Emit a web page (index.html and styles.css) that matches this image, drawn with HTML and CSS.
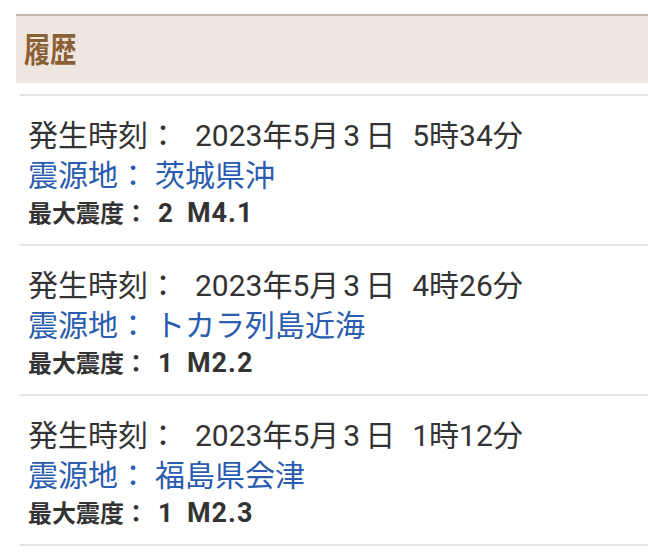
FILE: index.html
```html
<!DOCTYPE html>
<html lang="ja">
<head>
<meta charset="utf-8">
<title>履歴</title>
<link rel="stylesheet" href="styles.css">
</head>
<body>
<div class="page">
  <div class="section-head"><h2 class="section-title">履歴</h2></div>
  <ul class="history">
    <li class="entry">
      <div class="time"><span class="label">発生時刻：</span><span class="date">2023年5月<span class="day">3</span>日</span><span class="clock">5時34分</span></div>
      <div class="place"><span class="label">震源地：</span><span class="val">茨城県沖</span></div>
      <div class="scale"><span class="label">最大震度：</span><span class="num">2</span><span class="mag">M4.1</span></div>
    </li>
    <li class="entry">
      <div class="time"><span class="label">発生時刻：</span><span class="date">2023年5月<span class="day">3</span>日</span><span class="clock">4時26分</span></div>
      <div class="place"><span class="label">震源地：</span><span class="val">トカラ列島近海</span></div>
      <div class="scale"><span class="label">最大震度：</span><span class="num">1</span><span class="mag">M2.2</span></div>
    </li>
    <li class="entry">
      <div class="time"><span class="label">発生時刻：</span><span class="date">2023年5月<span class="day">3</span>日</span><span class="clock">1時12分</span></div>
      <div class="place"><span class="label">震源地：</span><span class="val">福島県会津</span></div>
      <div class="scale"><span class="label">最大震度：</span><span class="num">1</span><span class="mag">M2.3</span></div>
    </li>
  </ul>
</div>
</body>
</html>
```
FILE: styles.css
```css
html, body {
  margin: 0;
  padding: 0;
  background: #ffffff;
}
body {
  font-family: Roboto, "Noto Sans CJK JP", sans-serif;
  color: #333333;
}
.page {
  padding-top: 14px;
}
.section-head {
  margin-left: 16px;
  border-top: 2px solid #c5b6a6;
  background: #efe6e0;
  height: 67px;
  display: flex;
  align-items: center;
  padding-left: 8px;
}
.section-title {
  margin: 0;
  font-size: 34px;
  font-weight: 700;
  color: #8a6035;
  line-height: 1;
  transform: scaleX(0.77);
  transform-origin: left center;
}
.history {
  list-style: none;
  margin: 11px 0 0 20px;
  padding: 0;
  border-bottom: 2px solid #e5e5e5;
}
.entry {
  border-top: 2px solid #e5e5e5;
  padding: 20px 0 12px 8px;
}
.time {
  font-size: 30px;
  line-height: 40px;
  height: 40px;
  color: #333333;
  white-space: nowrap;
}
.time .label {
  margin-right: 17px;
}
.day {
  margin: 0 5px 0 4px;
}
.clock {
  margin-left: 17px;
}
.place {
  font-size: 30px;
  line-height: 40px;
  height: 40px;
  color: #2a5caf;
  white-space: nowrap;
}
.place .label {
  margin-right: 7px;
}
.scale {
  font-size: 24px;
  line-height: 36px;
  height: 36px;
  font-weight: 700;
  color: #333333;
  white-space: nowrap;
}
.scale .label {
  margin-right: 10px;
}
.num {
  font-size: 26px;
  line-height: 1;
}
.mag {
  font-size: 27px;
  line-height: 1;
  letter-spacing: 1px;
  margin-left: 14px;
}
```
